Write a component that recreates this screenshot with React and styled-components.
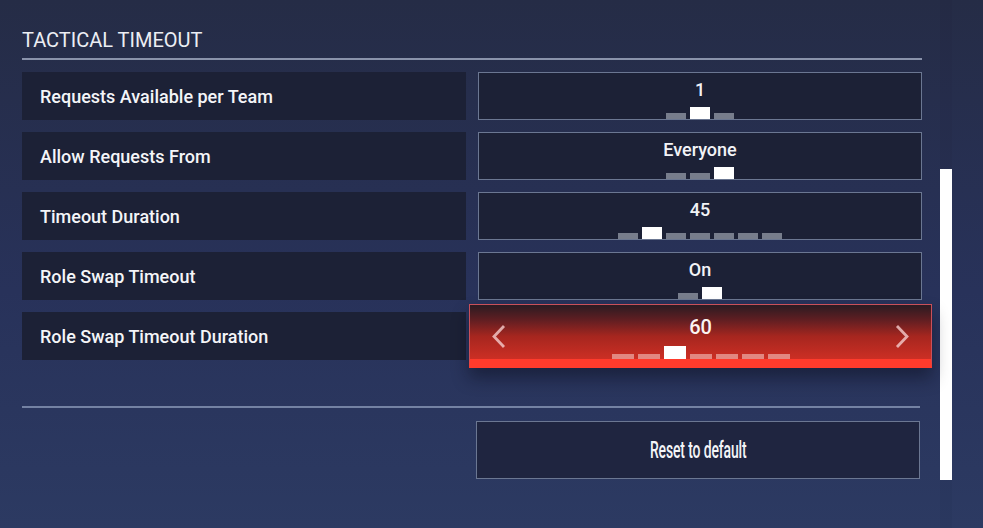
import React from "react";
import styled, { createGlobalStyle } from "styled-components";

const GlobalStyle = createGlobalStyle`
  html, body {
    margin: 0;
    padding: 0;
    height: 100%;
    overflow: hidden;
  }
  body {
    font-family: Roboto, "Noto Sans", "Liberation Sans", sans-serif;
    background: linear-gradient(180deg, #252c46 0%, #28325a 55%, #2c3a62 100%);
    color: #fff;
  }
`;

const settings = [
  { label: "Requests Available per Team", value: "1", count: 3, selected: 1 },
  { label: "Allow Requests From", value: "Everyone", count: 3, selected: 2 },
  { label: "Timeout Duration", value: "45", count: 7, selected: 1 },
  { label: "Role Swap Timeout", value: "On", count: 2, selected: 1 },
  { label: "Role Swap Timeout Duration", value: "60", count: 7, selected: 2, active: true },
];

function Pips({ count, selected, $big }) {
  return (
    <PipRow $big={$big}>
      {Array.from({ length: count }).map((_, i) => (
        <Pip key={i} $on={i === selected} $big={$big} />
      ))}
    </PipRow>
  );
}

function Chevron({ dir }) {
  const pts = dir === "left" ? "12,1 2,11.5 12,22" : "2,1 12,11.5 2,22";
  return (
    <ChevronIcon width="14" height="23" viewBox="0 0 14 23">
      <polyline points={pts} fill="none" stroke="rgba(245,205,205,0.8)" strokeWidth="2.8" />
    </ChevronIcon>
  );
}

export default function App() {
  return (
    <>
      <GlobalStyle />
      <Page>
        <Content>
          <SectionTitle>TACTICAL TIMEOUT</SectionTitle>
          <Rows>
            {settings.map((s) => (
              <Row key={s.label}>
                <Label>{s.label}</Label>
                {s.active ? (
                  <ActiveValue>
                    <Chevron dir="left" />
                    <ActiveCenter>
                      <ActiveText>{s.value}</ActiveText>
                      <Pips count={s.count} selected={s.selected} $big />
                    </ActiveCenter>
                    <Chevron dir="right" />
                  </ActiveValue>
                ) : (
                  <Value>
                    <ValueText>{s.value}</ValueText>
                    <Pips count={s.count} selected={s.selected} />
                  </Value>
                )}
              </Row>
            ))}
          </Rows>
          <Footer>
            <Divider />
            <ResetButton>
              <ResetLabel>Reset to default</ResetLabel>
            </ResetButton>
          </Footer>
        </Content>
        <ScrollTrack>
          <ScrollThumb />
        </ScrollTrack>
      </Page>
    </>
  );
}

const Page = styled.div`
  display: flex;
  height: 528px;
  padding-left: 22px;
  box-sizing: border-box;
`;

const Content = styled.div`
  width: 900px;
  padding-top: 28px;
`;

const SectionTitle = styled.h2`
  margin: 0;
  font-size: 20px;
  font-weight: 400;
  line-height: 24px;
  color: #eceef4;
  padding-bottom: 6px;
  border-bottom: 2px solid #8a93ab;
`;

const Rows = styled.div`
  display: flex;
  flex-direction: column;
  gap: 12px;
  margin-top: 12px;
`;

const Row = styled.div`
  display: grid;
  grid-template-columns: 444px 444px;
  gap: 12px;
  height: 48px;
`;

const Label = styled.div`
  background: #1c2136;
  display: flex;
  align-items: center;
  padding-left: 18px;
  font-size: 18px;
  font-weight: 500;
  color: #f4f5f8;
`;

const Value = styled.div`
  background: #1c2136;
  border: 1px solid #6b7792;
  box-sizing: border-box;
  display: flex;
  flex-direction: column;
  align-items: center;
  padding-top: 7px;
`;

const ValueText = styled.div`
  font-size: 18px;
  font-weight: 500;
  line-height: 20px;
  color: #f2f3f6;
`;

const PipRow = styled.div`
  display: flex;
  align-items: flex-end;
  gap: 4px;
  margin-top: auto;
`;

const Pip = styled.div`
  width: ${(p) => (p.$big ? "22px" : "20px")};
  height: ${(p) => (p.$on ? (p.$big ? "13px" : "12px") : p.$big ? "5px" : "6px")};
  background: ${(p) =>
    p.$on ? "#ffffff" : p.$big ? "rgba(240,185,180,0.65)" : "#777d8c"};
`;

const ActiveValue = styled.div`
  position: relative;
  z-index: 2;
  margin: -8px -10px -8px -9px;
  border: 1px solid #c9505a;
  border-bottom: 9px solid #ff3b2c;
  background: linear-gradient(180deg, #2a1b22 0%, #611e22 28%, #a6261f 58%, #cc2f24 100%);
  box-shadow: 0 10px 16px rgba(8, 10, 24, 0.45);
  display: flex;
  align-items: center;
  padding: 0 22px 0 22px;
`;

const ChevronIcon = styled.svg`
  flex-shrink: 0;
  margin-top: 8px;
`;

const ActiveCenter = styled.div`
  flex: 1;
  align-self: stretch;
  display: flex;
  flex-direction: column;
  align-items: center;
  padding-top: 11px;
`;

const ActiveText = styled.div`
  font-size: 20px;
  font-weight: 500;
  line-height: 22px;
  color: #fbf4f2;
`;

const Footer = styled.div`
  width: 898px;
  display: flex;
  flex-direction: column;
  align-items: flex-end;
`;

const Divider = styled.div`
  align-self: stretch;
  height: 2px;
  margin-top: 46px;
  background: #7482a3;
`;

const ResetButton = styled.button`
  margin-top: 13px;
  width: 444px;
  height: 58px;
  background: #1f2540;
  border: 1px solid #6b7792;
  display: flex;
  align-items: center;
  justify-content: center;
  padding: 0;
  cursor: pointer;
`;

const ResetLabel = styled.span`
  display: inline-block;
  font-family: Roboto, "Liberation Sans", sans-serif;
  font-size: 24px;
  font-weight: 500;
  color: #f4f5f8;
  letter-spacing: -0.2px;
  transform: scaleX(0.58);
  white-space: nowrap;
`;

const ScrollTrack = styled.div`
  margin-left: 18px;
  width: 12px;
  background: rgba(10, 14, 30, 0.05);
`;

const ScrollThumb = styled.div`
  margin-top: 169px;
  height: 311px;
  background: #ffffff;
`;
